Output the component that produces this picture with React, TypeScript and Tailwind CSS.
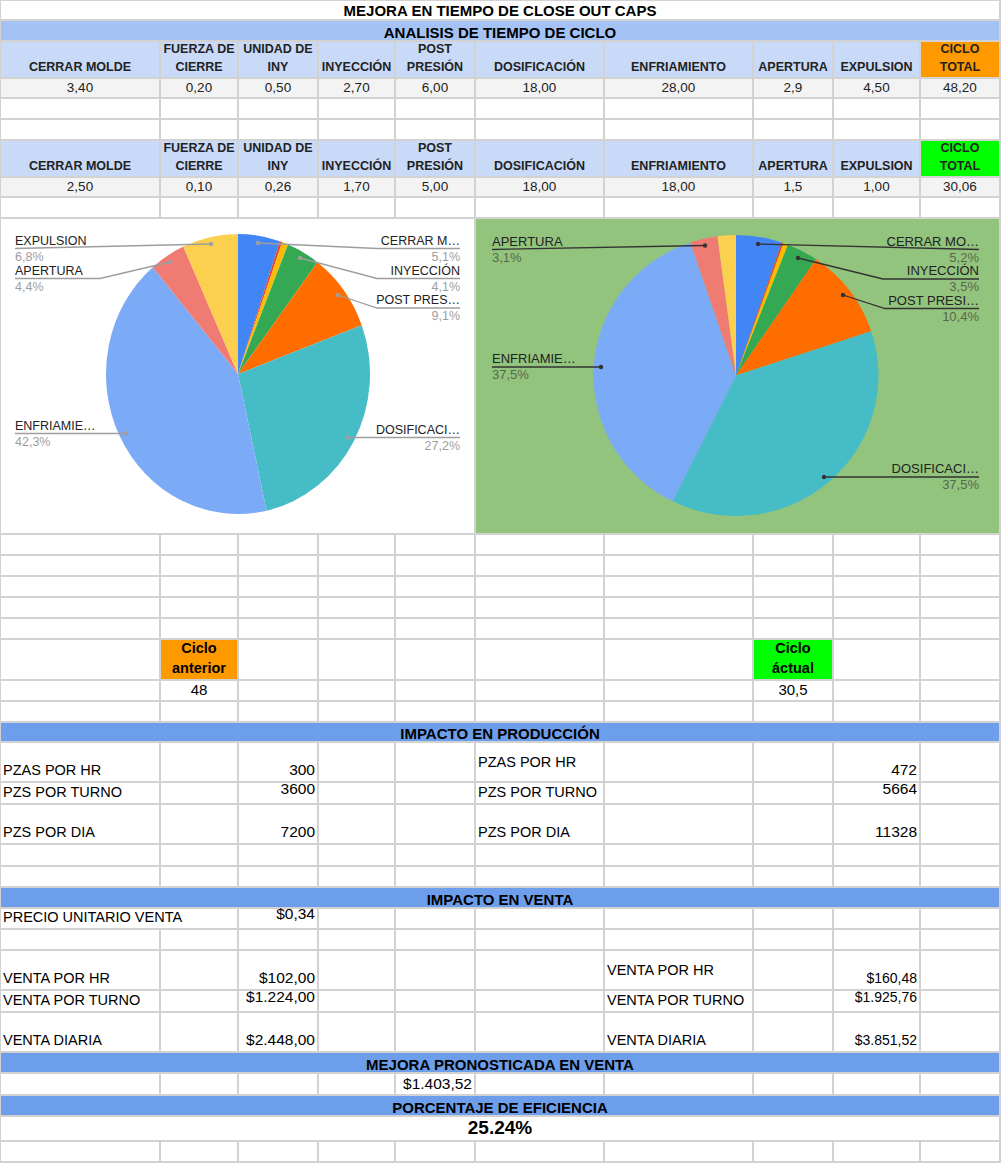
import React from "react";

const HEAD: (string | string[])[] = [
  "CERRAR MOLDE",
  ["FUERZA DE", "CIERRE"],
  ["UNIDAD DE", "INY"],
  "INYECCIÓN",
  ["POST", "PRESIÓN"],
  "DOSIFICACIÓN",
  "ENFRIAMIENTO",
  "APERTURA",
  "EXPULSION",
  ["CICLO", "TOTAL"],
];

const COLORS = ["#4285f4", "#ea4335", "#fbbc04", "#34a853", "#ff6d01", "#46bdc6", "#7baaf7", "#f07b72", "#fcd04f"];

type ChartLabel = { t: string; p: string; x: number; y: number; a: "start" | "end"; pts: string; dot: [number, number] };

const LEFT_LABELS: ChartLabel[] = [
  { t: "EXPULSION", p: "6,8%", x: 15, y: 245, a: "start", pts: "15,248.5 211,244", dot: [211, 244] },
  { t: "APERTURA", p: "4,4%", x: 15, y: 275, a: "start", pts: "15,278.5 100,278.5 170,262", dot: [170, 262] },
  { t: "CERRAR M…", p: "5,1%", x: 460, y: 245, a: "end", pts: "258,243 377,248.5 460,248.5", dot: [258, 243] },
  { t: "INYECCIÓN", p: "4,1%", x: 460, y: 275, a: "end", pts: "300,258 377,278.5 460,278.5", dot: [300, 258] },
  { t: "POST PRES…", p: "9,1%", x: 460, y: 304, a: "end", pts: "338,295 377,308 460,308", dot: [338, 295] },
  { t: "ENFRIAMIE…", p: "42,3%", x: 15, y: 430, a: "start", pts: "15,433.5 126,433.5", dot: [126, 433.5] },
  { t: "DOSIFICACI…", p: "27,2%", x: 460, y: 434, a: "end", pts: "348,437.5 460,437.5", dot: [348, 437.5] },
];

const RIGHT_LABELS: ChartLabel[] = [
  { t: "APERTURA", p: "3,1%", x: 492, y: 246, a: "start", pts: "492,249.5 705,245.5", dot: [705, 245.5] },
  { t: "CERRAR MO…", p: "5,2%", x: 979, y: 246, a: "end", pts: "758,244 979,249.5", dot: [758, 244] },
  { t: "INYECCIÓN", p: "3,5%", x: 979, y: 275, a: "end", pts: "798,258 883,279 979,279", dot: [798, 258] },
  { t: "POST PRESI…", p: "10,4%", x: 979, y: 305, a: "end", pts: "843,295 885,308.5 979,308.5", dot: [843, 295] },
  { t: "ENFRIAMIE…", p: "37,5%", x: 492, y: 363, a: "start", pts: "492,367 601,367", dot: [601, 367] },
  { t: "DOSIFICACI…", p: "37,5%", x: 979, y: 473, a: "end", pts: "824,477 979,477", dot: [824, 477] },
];

function Pie({ values, cx, cy, rx, ry }: { values: number[]; cx: number; cy: number; rx: number; ry: number }) {
  const total = values.reduce((a, b) => a + b, 0);
  let acc = 0;
  return (
    <>
      {values.map((v, i) => {
        const a0 = (acc / total) * Math.PI * 2;
        acc += v;
        const a1 = (acc / total) * Math.PI * 2;
        const x0 = cx + rx * Math.sin(a0);
        const y0 = cy - ry * Math.cos(a0);
        const x1 = cx + rx * Math.sin(a1);
        const y1 = cy - ry * Math.cos(a1);
        const large = a1 - a0 > Math.PI ? 1 : 0;
        return (
          <path
            key={i}
            d={`M${cx} ${cy}L${x0} ${y0}A${rx} ${ry} 0 ${large} 1 ${x1} ${y1}Z`}
            fill={COLORS[i]}
          />
        );
      })}
    </>
  );
}

function Labels({ items, size, line, pct }: { items: ChartLabel[]; size: number; line: string; pct: string }) {
  return (
    <>
      {items.map((l) => (
        <g key={l.t}>
          <polyline points={l.pts} fill="none" stroke={line} strokeWidth={1.3} />
          <circle cx={l.dot[0]} cy={l.dot[1]} r={2.2} fill={line} />
          <text x={l.x} y={l.y} textAnchor={l.a} fontSize={size} fill="#222">{l.t}</text>
          <text x={l.x} y={l.y + 16} textAnchor={l.a} fontSize={size} fill={pct}>{l.p}</text>
        </g>
      ))}
    </>
  );
}

const Blank = ({ n }: { n: number }) => (
  <>
    {Array.from({ length: n }).map((_, i) => (
      <div key={i} className="bg-white" />
    ))}
  </>
);

function HeaderRow({ last }: { last: string }) {
  return (
    <>
      {HEAD.map((h, i) => (
        <div
          key={i}
          className={`flex flex-col items-center justify-end pb-px text-[12.5px] font-bold leading-[18px] text-[#222] whitespace-nowrap ${i === 9 ? last : "bg-[#c9daf8]"}`}
        >
          {(Array.isArray(h) ? h : [h]).map((l) => (
            <span key={l}>{l}</span>
          ))}
        </div>
      ))}
    </>
  );
}

function ValueRow({ values }: { values: string[] }) {
  return (
    <>
      {values.map((v, i) => (
        <div key={i} className="bg-[#f3f3f3] flex items-end justify-center text-[13.5px] leading-[18px] text-[#222]">
          {v}
        </div>
      ))}
    </>
  );
}

const Section = ({ children }: { children: React.ReactNode }) => (
  <div className="col-span-10 bg-[#6d9eeb] flex items-end justify-center text-[15px] font-bold leading-[15px] text-black">
    {children}
  </div>
);

const Label = ({ children, mid }: { children: React.ReactNode; mid?: boolean }) => (
  <div
    className={`bg-white flex pl-[2px] text-[14.5px] leading-[18px] text-black whitespace-nowrap ${mid ? "items-center" : "items-end pb-[2px]"}`}
  >
    {children}
  </div>
);

// raised: the sheet leaves these a couple of px above the cell bottom
const Num = ({ children, small, raised }: { children: React.ReactNode; small?: boolean; raised?: boolean }) => (
  <div
    className={`bg-white flex items-end justify-end pr-[2px] leading-[18px] text-black whitespace-nowrap ${small ? "text-[14px]" : "text-[15.5px]"} ${raised ? "pb-[5px]" : "pb-[2px]"}`}
  >
    {children}
  </div>
);

export default function App() {
  return (
    <div className="w-[1001px] bg-white font-['Liberation_Sans',Arial,sans-serif]">
      <div className="grid grid-cols-[158px_76px_78px_75px_78px_127px_147px_78px_85px_78px] grid-rows-[18px_19px_35px_18px_19px_19px_35px_18px_19px_314px_19px_19px_19px_19px_19px_39px_19px_19px_18px_38px_20px_38px_20px_19px_19px_19px_19px_38px_20px_38px_19px_20px_19px_23px_19px] gap-[2px] bg-[#d2d2d2] pt-px pl-px pr-[2px] pb-[2px]">
        {/* title */}
        <div className="col-span-10 bg-white flex items-end justify-center pb-px text-[15px] font-bold leading-[15px] text-black">
          MEJORA EN TIEMPO DE CLOSE OUT CAPS
        </div>
        <div className="col-span-10 bg-[#a4c2f4] flex items-end justify-center text-[15px] font-bold leading-[15px] text-black">
          ANALISIS DE TIEMPO DE CICLO
        </div>

        <HeaderRow last="bg-[#ff9900]" />
        <ValueRow values={["3,40", "0,20", "0,50", "2,70", "6,00", "18,00", "28,00", "2,9", "4,50", "48,20"]} />
        <Blank n={20} />

        <HeaderRow last="bg-[#00ff00]" />
        <ValueRow values={["2,50", "0,10", "0,26", "1,70", "5,00", "18,00", "18,00", "1,5", "1,00", "30,06"]} />
        <Blank n={10} />

        {/* charts */}
        <div className="col-span-5 bg-white">
          <svg width="473" height="314" viewBox="1 219 473 314" className="block">
            <Pie values={[3.4, 0.2, 0.5, 2.7, 6, 18, 28, 2.9, 4.5]} cx={238} cy={374} rx={132} ry={140} />
            <Labels items={LEFT_LABELS} size={12.5} line="#9e9e9e" pct="#9e9e9e" />
          </svg>
        </div>
        <div className="col-span-5 bg-[#93c47d]">
          <svg width="523" height="314" viewBox="476 219 523 314" className="block">
            <Pie values={[2.5, 0.1, 0.26, 1.7, 5, 18, 18, 1.5, 1]} cx={736} cy={375.5} rx={142.5} ry={140.5} />
            <Labels items={RIGHT_LABELS} size={13} line="#333333" pct="#56694d" />
          </svg>
        </div>

        <Blank n={50} />

        {/* ciclo */}
        <div className="bg-white" />
        <div className="bg-[#ff9900] flex flex-col items-center justify-end pb-px text-[14.5px] font-bold leading-[20px] text-black">
          <span>Ciclo</span>
          <span>anterior</span>
        </div>
        <Blank n={5} />
        <div className="bg-[#00ff00] flex flex-col items-center justify-end pb-px text-[14.5px] font-bold leading-[20px] text-black">
          <span>Ciclo</span>
          <span>áctual</span>
        </div>
        <Blank n={2} />

        <div className="bg-white" />
        <div className="bg-white flex items-center justify-center text-[15px] text-black">48</div>
        <Blank n={5} />
        <div className="bg-white flex items-center justify-center text-[15px] text-black">30,5</div>
        <Blank n={2} />

        <Blank n={10} />

        <Section>IMPACTO EN PRODUCCIÓN</Section>

        <Label>PZAS POR HR</Label>
        <div className="bg-white" />
        <Num>300</Num>
        <Blank n={2} />
        <Label mid>PZAS POR HR</Label>
        <Blank n={2} />
        <Num>472</Num>
        <div className="bg-white" />

        <Label>PZS POR TURNO</Label>
        <div className="bg-white" />
        <Num raised>3600</Num>
        <Blank n={2} />
        <Label>PZS POR TURNO</Label>
        <Blank n={2} />
        <Num raised>5664</Num>
        <div className="bg-white" />

        <Label>PZS POR DIA</Label>
        <div className="bg-white" />
        <Num>7200</Num>
        <Blank n={2} />
        <Label>PZS POR DIA</Label>
        <Blank n={2} />
        <Num>11328</Num>
        <div className="bg-white" />

        <Blank n={20} />

        <Section>IMPACTO EN VENTA</Section>

        <div className="col-span-2 bg-white flex items-end pl-[2px] pb-[2px] text-[14.5px] leading-[18px] text-black whitespace-nowrap">
          PRECIO UNITARIO VENTA
        </div>
        <Num raised>$0,34</Num>
        <Blank n={7} />

        <Blank n={10} />

        <Label>VENTA POR HR</Label>
        <div className="bg-white" />
        <Num>$102,00</Num>
        <Blank n={3} />
        <Label mid>VENTA POR HR</Label>
        <div className="bg-white" />
        <Num small>$160,48</Num>
        <div className="bg-white" />

        <Label>VENTA POR TURNO</Label>
        <div className="bg-white" />
        <Num raised>$1.224,00</Num>
        <Blank n={3} />
        <Label>VENTA POR TURNO</Label>
        <div className="bg-white" />
        <Num small raised>$1.925,76</Num>
        <div className="bg-white" />

        <Label>VENTA DIARIA</Label>
        <div className="bg-white" />
        <Num>$2.448,00</Num>
        <Blank n={3} />
        <Label>VENTA DIARIA</Label>
        <div className="bg-white" />
        <Num small>$3.851,52</Num>
        <div className="bg-white" />

        <Section>MEJORA PRONOSTICADA EN VENTA</Section>

        <Blank n={4} />
        <div className="bg-white flex items-center justify-end pr-[2px] text-[15.5px] text-black">$1.403,52</div>
        <Blank n={5} />

        <Section>PORCENTAJE DE EFICIENCIA</Section>

        <div className="col-span-10 bg-white flex items-end justify-center pb-[2px] text-[19px] font-bold leading-[20px] text-black">
          25.24%
        </div>

        <Blank n={10} />
      </div>
    </div>
  );
}
